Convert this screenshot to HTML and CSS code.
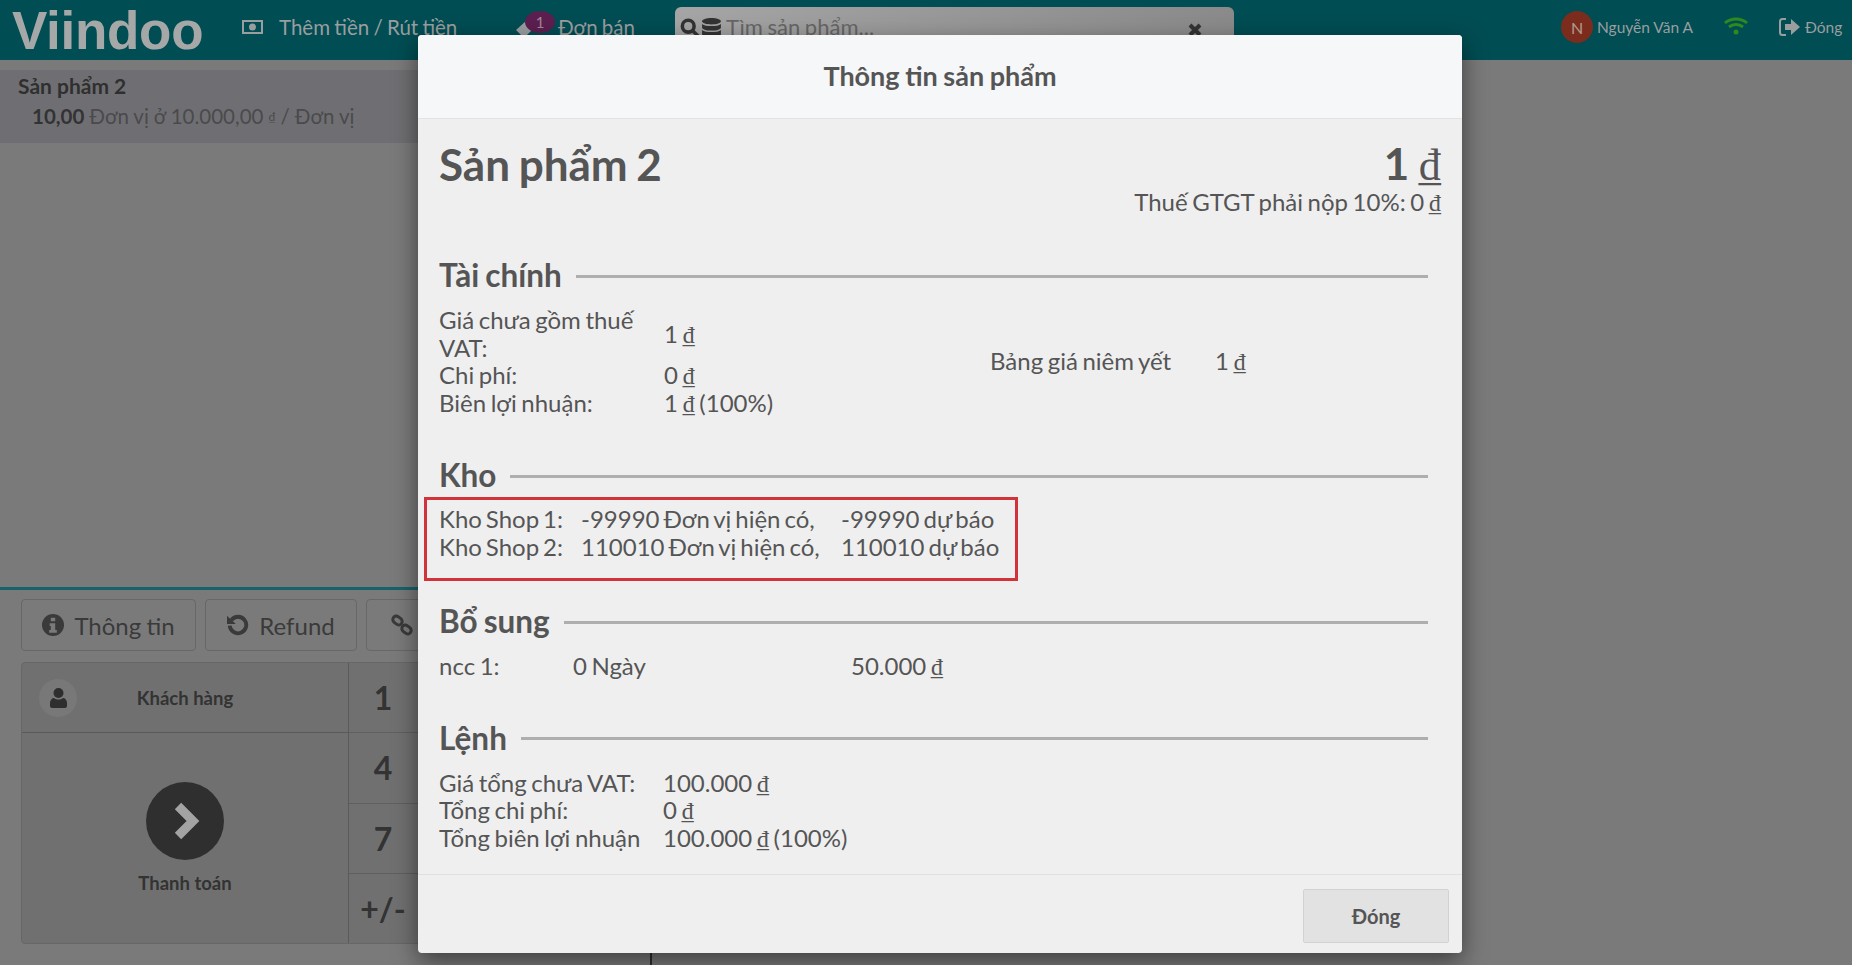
FILE: index.html
```html
<!DOCTYPE html>
<html lang="vi">
<head>
  <meta charset="UTF-8" />
  <title>Viindoo POS</title>
  <link rel="stylesheet" href="styles.css">
</head>
<body>
  <header class="topbar">
    <div class="logo">Viindoo</div>
    <div class="nav-item cash">
      <svg class="ico" width="21" height="14" viewBox="0 0 21 14"><path fill="currentColor" fill-rule="evenodd" d="M0 0h21v14H0zM2 2v10h17V2zM10.500 3.500a3.500 3.500 0 1 1 0 7 3.500 3.500 0 0 1 0-7z"/></svg>
      <span>Thêm tiền / Rút tiền</span>
    </div>
    <div class="nav-item orders">
      <svg class="ico" width="22" height="20" viewBox="0 0 22 20"><path fill="currentColor" d="M1 11 11 2h8v7L9 19z"/></svg>
      <span class="badge">1</span>
      <span>Đơn bán</span>
    </div>
    <div class="search">
      <svg width="20" height="20" viewBox="0 0 17 17"><circle cx="7" cy="7" r="5" fill="none" stroke="currentColor" stroke-width="3"/><path d="m11 11 5 5" stroke="currentColor" stroke-width="3"/></svg>
      <svg width="19" height="20" viewBox="0 0 16 17"><path fill="currentColor" d="M8 0c4.400 0 8 1.200 8 2.800S12.400 5.500 8 5.500 0 4.400 0 2.800 3.600 0 8 0zM0 5c1.500 1.300 4.500 1.800 8 1.800S14.500 6.300 16 5v3c0 1.500-3.600 2.700-8 2.700S0 9.500 0 8zm0 5.200c1.500 1.300 4.500 1.800 8 1.800s6.500-.5 8-1.800v3.900c0 1.500-3.600 2.700-8 2.700s-8-1.200-8-2.700z"/></svg>
      <span class="search-text">Tìm sản phẩm...</span>
      <svg class="search-clear" width="14" height="14" viewBox="0 0 14 14"><path d="m2 2 10 10M12 2 2 12" stroke="currentColor" stroke-width="4"/></svg>
    </div>
    <div class="user">
      <span class="avatar">N</span>
      <span>Nguyễn Văn A</span>
    </div>
    <svg class="wifi" width="26" height="20" viewBox="0 0 26 20"><g fill="none" stroke="#2f8a1e" stroke-width="3"><path d="M2 7c6-5.500 16-5.500 22 0"/><path d="M6 11c4-3.500 10-3.500 14 0"/></g><circle cx="13" cy="16" r="2.500" fill="#2f8a1e"/></svg>
    <div class="close-nav">
      <svg width="21" height="20" viewBox="0 0 21 20"><path fill="none" stroke="currentColor" stroke-width="2" d="M7 2H3.500C2 2 1 3 1 4.500v11C1 17 2 18 3.500 18H7"/><path fill="currentColor" d="M6 7h6V2l9 8-9 8v-5H6z"/></svg>
      <span>Đóng</span>
    </div>
  </header>

  <main class="leftpane">
    <div class="orders-area">
      <div class="orderline">
        <div class="orderline-name">Sản phẩm 2</div>
        <div class="orderline-info"><b>10,00</b> Đơn vị ở 10.000,00 <small>₫</small> / Đơn vị</div>
      </div>
    </div>
    <div class="controls">
      <div class="action-row">
        <div class="action info-btn">
          <svg width="22" height="22" viewBox="0 0 20 20"><circle cx="10" cy="10" r="10" fill="currentColor"/><path fill="#7a7a7a" d="M8 3.500h4v3H8zM7 8.500h5v6h1.500v2.500h-7v-2.500H8v-3.500H7z"/></svg>
          Thông tin
        </div>
        <div class="action refund-btn">
          <svg width="22" height="22" viewBox="0 0 20 20"><path fill="none" stroke="currentColor" stroke-width="3.500" d="M4 5.500a7.500 7.500 0 1 1-1.500 5"/><path fill="currentColor" d="M0 1.500 8 9H0z"/></svg>
          Refund
        </div>
        <div class="action link-btn">
          <svg width="22" height="22" viewBox="0 0 22 22"><g fill="none" stroke="currentColor" stroke-width="3"><rect x="1.500" y="3" width="10" height="7" rx="3.500" transform="rotate(38 6.500 6.500)"/><rect x="10.500" y="12" width="10" height="7" rx="3.500" transform="rotate(38 15.500 15.500)"/></g></svg>
        </div>
      </div>
      <div class="panel">
        <div class="pay-side">
          <div class="customer">
            <span class="customer-icon">
              <svg width="17" height="20" viewBox="0 0 17 20"><circle cx="8.500" cy="5" r="5" fill="currentColor"/><path fill="currentColor" d="M0 15c0-3 2-5 4-5 1 1 3 1.500 4.500 1.500S12 11 13 10c2 0 4 2 4 5v3c0 1-1 2-2 2H2c-1 0-2-1-2-2z"/></svg>
            </span>
            <span class="customer-name">Khách hàng</span>
          </div>
          <div class="pay">
            <span class="pay-circle">
              <svg width="26" height="38" viewBox="0 0 26 38"><path fill="none" stroke="#a3a3a3" stroke-width="9" d="m4 4 15 15L4 34"/></svg>
            </span>
            <span class="pay-label">Thanh toán</span>
          </div>
        </div>
        <div class="numpad">
          <div class="key">1</div>
          <div class="key">4</div>
          <div class="key">7</div>
          <div class="key">+/-</div>
        </div>
      </div>
    </div>
  </main>

  <section class="modal">
    <div class="modal-title">Thông tin sản phẩm</div>
    <div class="modal-body">
      <div class="product-head">
        <div class="product-name">Sản phẩm 2</div>
        <div class="product-price">
          <div class="price">1 <span class="cur">₫</span></div>
          <div class="tax">Thuế GTGT phải nộp 10%: 0 <span class="cur">₫</span></div>
        </div>
      </div>

      <h3 class="section-title">Tài chính</h3>
      <div class="finance">
        <div class="finance-rows">
          <div>Giá chưa gồm thuế VAT:</div><div>1 <span class="cur">₫</span></div>
          <div>Chi phí:</div><div>0 <span class="cur">₫</span></div>
          <div>Biên lợi nhuận:</div><div>1 <span class="cur">₫</span> (100%)</div>
        </div>
        <div class="pricelist">
          <div>Bảng giá niêm yết</div><div>1 <span class="cur">₫</span></div>
        </div>
      </div>

      <h3 class="section-title stock-title">Kho</h3>
      <div class="stock-box">
        <div class="stock-rows">
          <div>Kho Shop 1:</div><div>-99990 Đơn vị hiện có,</div><div>-99990 dự báo</div>
          <div>Kho Shop 2:</div><div>110010 Đơn vị hiện có,</div><div>110010 dự báo</div>
        </div>
      </div>

      <h3 class="section-title extra-title">Bổ sung</h3>
      <div class="supplier-row">
        <div>ncc 1:</div><div>0 Ngày</div><div>50.000 <span class="cur">₫</span></div>
      </div>

      <h3 class="section-title order-title">Lệnh</h3>
      <div class="order-rows">
        <div>Giá tổng chưa VAT:</div><div>100.000 <span class="cur">₫</span></div>
        <div>Tổng chi phí:</div><div>0 <span class="cur">₫</span></div>
        <div>Tổng biên lợi nhuận</div><div>100.000 <span class="cur">₫</span> (100%)</div>
      </div>
    </div>
    <div class="modal-footer">
      <div class="close-btn">Đóng</div>
    </div>
  </section>
</body>
</html>
```

FILE: styles.css
```css
* { margin: 0; padding: 0; box-sizing: border-box; }
body {
  font-family: 'Lato', sans-serif;
  background: #7a7a7a;
  color: #333;
  height: 965px;
  overflow: hidden;
  position: relative;
}

/* top bar */
.topbar {
  height: 60px;
  padding-bottom: 6px;
  background: #004d53;
  color: #9a9e9f;
  display: flex;
  align-items: center;
}
.logo {
  font-family: 'Liberation Sans', sans-serif;
  font-weight: 700;
  font-size: 53px;
  align-self: flex-start;
  letter-spacing: -0.300px;
  color: #a6a8a8;
  margin-left: 12px;
  width: 230px;
  flex-shrink: 0;
}
.nav-item {
  display: flex;
  align-items: center;
  font-size: 20.500px;
  word-spacing: -1px;
}
.cash { width: 273px; }
.cash .ico { margin-right: 16px; }
.orders { width: 160px; position: relative; }
.orders .ico { margin-right: 21px; margin-top: 4px; }
.badge {
  position: absolute;
  left: 10px;
  top: -4px;
  width: 30px;
  height: 22px;
  border-radius: 50%;
  background: #5c1f50;
  color: #a08a9c;
  font-size: 15px;
  text-align: center;
  line-height: 22px;
}
.search {
  width: 559px;
  height: 46px;
  align-self: flex-start;
  margin-top: 7px;
  background: linear-gradient(90deg, #a5a5a5, #8a8a8a);
  border-radius: 6px;
  color: #333;
  display: flex;
  padding: 11px 0 0 5px;
  gap: 2px;
  position: relative;
}
.search-text {
  font-size: 22px;
  color: #666;
  line-height: 20px;
  word-spacing: -1px;
  margin: -1px 0 0 3px;
}
.search-clear { position: absolute; left: 513px; top: 16px; }
.user {
  margin-left: 327px;
  display: flex;
  align-items: center;
  gap: 4px;
  font-size: 15.500px;
  width: 162px;
}
.avatar {
  width: 32px;
  height: 32px;
  border-radius: 50%;
  background: #7b2c1c;
  color: #b19a93;
  text-align: center;
  line-height: 34px;
  font-size: 16px;
}
.wifi { margin-right: 30px; margin-top: -2px; }
.close-nav {
  display: flex;
  align-items: center;
  gap: 5px;
  font-size: 15.500px;
}

/* left side */
.leftpane {
  width: 652px;
  height: 905px;
  border-right: 2px solid #2e2e2e;
}
.orders-area {
  height: 530px;
  padding-top: 10px;
  border-bottom: 3px solid #17636a;
}
.orderline {
  height: 73px;
  background: #6f6f73;
  padding: 1px 18px;
  color: #2f2f2f;
}
.orderline-name { font-weight: 700; font-size: 21px; line-height: 30px; }
.orderline-info {
  font-size: 20.500px;
  word-spacing: -0.300px;
  line-height: 30px;
  padding-left: 14px;
  color: #4a4a4c;
}
.orderline-info b { color: #333; }
.orderline-info small { font-size: 12px; vertical-align: 3px; }
.controls { padding: 9px 0 0 21px; }
.action-row { display: flex; gap: 9px; height: 52px; }
.action {
  height: 52px;
  border: 1px solid #676767;
  border-radius: 4px;
  display: flex;
  align-items: center;
  justify-content: center;
  gap: 10px;
  font-size: 24px;
  word-spacing: -1px;
  color: #3a3a3a;
}
.info-btn { width: 175px; }
.refund-btn { width: 152px; }
.link-btn { width: 120px; justify-content: flex-start; padding-left: 24px; }
.panel {
  margin-top: 11px;
  width: 600px;
  height: 282px;
  border: 1px solid #676767;
  border-radius: 4px;
  display: flex;
  background: #707070;
}
.pay-side { width: 327px; border-right: 1px solid #5a5a5a; }
.customer {
  height: 70px;
  border-bottom: 1px solid #5a5a5a;
  display: flex;
  align-items: center;
  padding-left: 17px;
}
.customer-icon {
  width: 38px;
  height: 38px;
  border-radius: 50%;
  background: #787878;
  display: flex;
  align-items: center;
  justify-content: center;
  color: #2e2e2e;
}
.customer-name {
  flex: 1;
  text-align: center;
  padding-right: 55px;
  font-size: 18.500px;
  font-weight: 700;
  color: #333;
}
.pay {
  display: flex;
  flex-direction: column;
  align-items: center;
  padding-top: 49px;
}
.pay-circle {
  width: 78px;
  height: 78px;
  border-radius: 50%;
  background: #2f2f2f;
  display: flex;
  align-items: center;
  justify-content: center;
  padding-left: 3px;
}
.pay-label { font-size: 18.500px; font-weight: 700; margin-top: 12px; color: #333; }
.numpad { width: 76px; display: flex; flex-direction: column; }
.key {
  flex: 1;
  display: flex;
  align-items: center;
  justify-content: center;
  padding-right: 8px;
  font-size: 32px;
  font-weight: 700;
  color: #333;
  border-bottom: 1px solid #5f5f5f;
}
.key:last-child { border-bottom: none; }

/* modal */
.modal {
  position: absolute;
  left: 418px;
  top: 35px;
  width: 1044px;
  height: 918px;
  background: #efeff0;
  border-radius: 4px;
  box-shadow: 0 8px 24px rgba(0, 0, 0, 0.5);
  color: #555;
  display: flex;
  flex-direction: column;
}
.modal-title {
  height: 84px;
  background: #f6f7f8;
  border-bottom: 1px solid #e2e2e2;
  border-radius: 4px 4px 0 0;
  text-align: center;
  font-size: 27px;
  word-spacing: -1px;
  font-weight: 700;
  line-height: 82px;
}
.modal-body {
  flex: 1;
  padding: 0 21px;
  font-size: 24px;
  word-spacing: -1.600px;
  line-height: 27.500px;
}
.cur { font-family: 'Liberation Serif', serif; font-weight: 400; line-height: 1; }
.product-head { display: flex; justify-content: space-between; height: 136px; }
.product-name {
  font-size: 44px;
  word-spacing: -2px;
  font-weight: 700;
  line-height: 50px;
  padding-top: 20px;
}
.price {
  font-size: 44px;
  font-weight: 700;
  line-height: 50px;
  padding-top: 19px;
  text-align: right;
}
.tax { text-align: right; line-height: 28px; }
.section-title {
  display: flex;
  align-items: center;
  gap: 14px;
  font-size: 31.500px;
  font-weight: 700;
  line-height: 40px;
  margin-right: 13px;
}
.section-title::after {
  content: "";
  flex: 1;
  height: 3px;
  background: #aeaeae;
  margin-top: 2px;
}
.finance { display: flex; align-items: center; margin-top: 11px; }
.finance-rows { display: grid; grid-template-columns: 225px 1fr; width: 551px; align-items: center; }
.pricelist { display: grid; grid-template-columns: 225px 1fr; }
.stock-title { margin-top: 39px; }
.stock-box {
  margin: 2px 0 0 -15px;
  width: 594px;
  height: 84px;
  border: 3px solid #d0333a;
  padding: 5px 0 0 12px;
}
.stock-rows { display: grid; grid-template-columns: 142px 260px auto; word-spacing: -2.200px; }
.extra-title { margin-top: 20px; }
.supplier-row {
  display: grid;
  grid-template-columns: 134px 278px auto;
  margin-top: 11px;
}
.order-title { margin-top: 38px; }
.order-rows {
  display: grid;
  grid-template-columns: 224px auto;
  margin-top: 11px;
}
.modal-footer {
  height: 79px;
  border-top: 1px solid #e0e0e1;
  display: flex;
  justify-content: flex-end;
  padding: 14px 13px 0 0;
}
.close-btn {
  width: 146px;
  height: 54px;
  background: #e2e2e3;
  border: 1px solid #d2d2d2;
  border-radius: 2px;
  text-align: center;
  line-height: 52px;
  font-size: 20px;
  font-weight: 700;
}
```
